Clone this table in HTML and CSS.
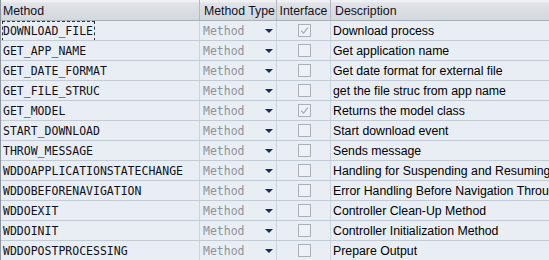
FILE: index.html
```html
<!DOCTYPE html>
<html>
<head>
<meta charset="utf-8">
<link rel="stylesheet" href="styles.css">
</head>
<body>
<div class="grid">
  <div class="row head">
    <div class="c c1">Method</div>
    <div class="c c2">Method Type</div>
    <div class="c c3">Interface</div>
    <div class="c c4">Description</div>
  </div>
  <div class="row"><div class="c c1 mono"><span class="focus">DOWNLOAD_FILE</span></div><div class="c c2 mono type"><span>Method</span><i class="arrow"></i></div><div class="c c3"><span class="cb on"><svg viewBox="0 0 12 12"><path d="M2.5 6.2 L5 8.8 L9.6 2.8" fill="none" stroke="#a3a9b0" stroke-width="1.3"/></svg></span></div><div class="c c4">Download process</div></div>
  <div class="row"><div class="c c1 mono">GET_APP_NAME</div><div class="c c2 mono type"><span>Method</span><i class="arrow"></i></div><div class="c c3"><span class="cb"></span></div><div class="c c4">Get application name</div></div>
  <div class="row"><div class="c c1 mono">GET_DATE_FORMAT</div><div class="c c2 mono type"><span>Method</span><i class="arrow"></i></div><div class="c c3"><span class="cb"></span></div><div class="c c4">Get date format for external file</div></div>
  <div class="row"><div class="c c1 mono">GET_FILE_STRUC</div><div class="c c2 mono type"><span>Method</span><i class="arrow"></i></div><div class="c c3"><span class="cb"></span></div><div class="c c4">get the file struc from app name</div></div>
  <div class="row"><div class="c c1 mono">GET_MODEL</div><div class="c c2 mono type"><span>Method</span><i class="arrow"></i></div><div class="c c3"><span class="cb on"><svg viewBox="0 0 12 12"><path d="M2.5 6.2 L5 8.8 L9.6 2.8" fill="none" stroke="#a3a9b0" stroke-width="1.3"/></svg></span></div><div class="c c4">Returns the model class</div></div>
  <div class="row"><div class="c c1 mono">START_DOWNLOAD</div><div class="c c2 mono type"><span>Method</span><i class="arrow"></i></div><div class="c c3"><span class="cb"></span></div><div class="c c4">Start download event</div></div>
  <div class="row"><div class="c c1 mono">THROW_MESSAGE</div><div class="c c2 mono type"><span>Method</span><i class="arrow"></i></div><div class="c c3"><span class="cb"></span></div><div class="c c4">Sends message</div></div>
  <div class="row"><div class="c c1 mono">WDDOAPPLICATIONSTATECHANGE</div><div class="c c2 mono type"><span>Method</span><i class="arrow"></i></div><div class="c c3"><span class="cb"></span></div><div class="c c4">Handling for Suspending and Resuming an Application</div></div>
  <div class="row"><div class="c c1 mono">WDDOBEFORENAVIGATION</div><div class="c c2 mono type"><span>Method</span><i class="arrow"></i></div><div class="c c3"><span class="cb"></span></div><div class="c c4">Error Handling Before Navigation Through Application</div></div>
  <div class="row"><div class="c c1 mono">WDDOEXIT</div><div class="c c2 mono type"><span>Method</span><i class="arrow"></i></div><div class="c c3"><span class="cb"></span></div><div class="c c4">Controller Clean-Up Method</div></div>
  <div class="row"><div class="c c1 mono">WDDOINIT</div><div class="c c2 mono type"><span>Method</span><i class="arrow"></i></div><div class="c c3"><span class="cb"></span></div><div class="c c4">Controller Initialization Method</div></div>
  <div class="row"><div class="c c1 mono">WDDOPOSTPROCESSING</div><div class="c c2 mono type"><span>Method</span><i class="arrow"></i></div><div class="c c3"><span class="cb"></span></div><div class="c c4">Prepare Output</div></div>
</div>
</body>
</html>
```
FILE: styles.css
```css
html, body {
  margin: 0;
  padding: 0;
  background: #e8eef4;
  overflow: hidden;
}
.grid {
  width: 549px;
  height: 260px;
  overflow: hidden;
  border-left: 1px solid #8e969f;
  box-sizing: border-box;
  font-family: "Liberation Sans", Arial, sans-serif;
  font-size: 12.3px;
  color: #000;
}
.row {
  display: grid;
  grid-template-columns: 199px 77px 54px 250px;
  height: 20px;
  background: #e8eef4;
  border-bottom: 1px solid #c3cbd4;
  box-sizing: border-box;
}
.row .c {
  display: flex;
  align-items: center;
  border-right: 1px solid #cdd5de;
  padding-left: 2px;
  white-space: nowrap;
  overflow: hidden;
  box-sizing: border-box;
}
.row .c4 { border-right: none; padding-left: 2px; }
.head {
  height: 21px;
  background: linear-gradient(#eef0f3 0, #eef0f3 2px, #e0e3e7 3px, #d3d8dd 100%);
  border-bottom: 1px solid #a9b1ba;
  color: #111126;
}
.head .c {
  border-right: 1px solid #b3bac3;
  padding-left: 4px;
  padding-top: 1px;
}
.head .c1 { padding-left: 3px; }
.mono {
  font-family: "DejaVu Sans Mono", "Liberation Mono", monospace;
  font-size: 11.5px;
  color: #101020;
}
.row .c1 { padding-left: 2px; }
.focus {
  outline: 1px dashed #333;
  outline-offset: 0;
  padding: 2px 1px 2px 0;
  line-height: 14px;
}
.type {
  justify-content: space-between;
  color: #8e939a;
  padding-right: 3px;
}
.row .type { padding-left: 3px; }
.arrow {
  width: 0;
  height: 0;
  border-left: 4.5px solid transparent;
  border-right: 4.5px solid transparent;
  border-top: 4px solid #1b2a5a;
  margin-top: 1px;
}
.c3 { justify-content: center; }
.row .c3 { padding-left: 0; }
.cb {
  width: 11px;
  height: 11px;
  border: 1px solid #a9b0b8;
  background: #eef2f6;
  display: block;
  margin-left: 1px;
}
.cb svg { width: 11px; height: 11px; display: block; }
.c4 { overflow: hidden; }
```
